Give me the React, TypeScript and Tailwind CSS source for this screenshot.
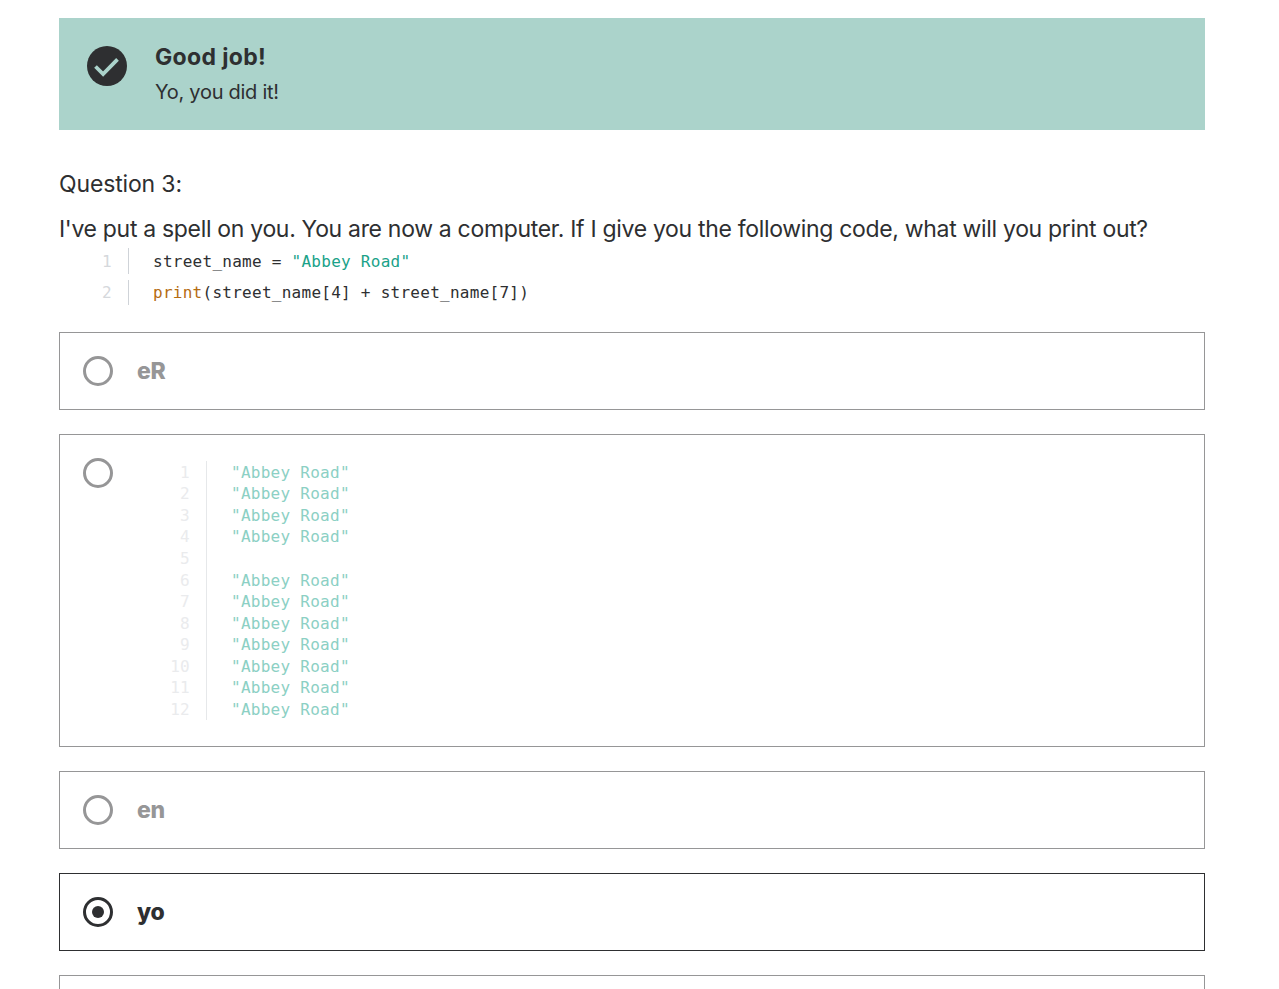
import type { ReactNode } from "react";

const abbey = '"Abbey Road"';
const outputLines = [abbey, abbey, abbey, abbey, "", abbey, abbey, abbey, abbey, abbey, abbey, abbey];

function Radio({ checked = false }: { checked?: boolean }) {
  return (
    <span
      className={`flex size-[30px] shrink-0 items-center justify-center rounded-full border-3 ${
        checked ? "border-[#2e2f31]" : "border-[#969697]"
      }`}
    >
      {checked && <span className="size-3 rounded-full bg-[#2e2f31]" />}
    </span>
  );
}

function Option({ checked = false, children }: { checked?: boolean; children?: ReactNode }) {
  return (
    <div
      className={`flex h-[78px] shrink-0 items-center gap-6 border px-[23px] text-[23px] font-extrabold tracking-[-0.3px] ${
        checked ? "border-[#2e2f31] text-[#2e2f31]" : "border-[#969697] text-[#969697]"
      }`}
    >
      <Radio checked={checked} />
      {children}
    </div>
  );
}

function CodeLine({ number, children }: { number: number; children: ReactNode }) {
  return (
    <div className="group flex h-[25px] items-center first:h-[26px]">
      <span className="w-[53px] text-right text-[#d5d8dc] group-first:pt-px">{number}</span>
      <span className="ml-4 h-full w-px bg-[#cfd3d8]" />
      <code className="ml-6 whitespace-pre font-['DejaVu_Sans_Mono',monospace] group-first:pt-px">{children}</code>
    </div>
  );
}

export default function App() {
  return (
    <main className="h-[989px] overflow-hidden bg-white pt-[18px] pr-[74px] pl-[59px] font-[Inter,sans-serif] text-[#2e2f31]">
      <section className="flex h-28 gap-7 bg-[#abd3cb] px-7 pt-[23px]">
        <svg className="mt-[5px] size-10 shrink-0" viewBox="0 0 40 40" fill="none">
          <circle cx="20" cy="20" r="20" fill="#2e2f31" />
          <path d="M8.5 20.5 L16.1 28 L30.5 13.4" stroke="#abd3cb" strokeWidth="3.8" />
        </svg>
        <div>
          <h1 className="text-[23px] leading-8 font-bold tracking-[0.35px]"><span>Good job!</span></h1>
          <p className="mt-1 text-[20px] leading-[30px] tracking-[-0.27px]"><span>Yo, you did it!</span></p>
        </div>
      </section>

      <h2 className="mt-9 text-[23px] leading-9 tracking-[-0.15px]"><span>Question 3:</span></h2>
      <p className="mt-[9px] text-[23px] leading-9 tracking-[-0.317px] whitespace-nowrap">
        <span>I've put a spell on you. You are now a computer. If I give you the following code, what will you print out?</span>
      </p>

      <div className="mt-px flex flex-col gap-[6px] font-['DejaVu_Sans_Mono',monospace] text-[16px] tracking-[0.265px]">
        <CodeLine number={1}>
          street_name = <span className="text-[#1aa289]">{abbey}</span>
        </CodeLine>
        <CodeLine number={2}>
          <span className="text-[#b56c12]">print</span>(street_name[4] + street_name[7])
        </CodeLine>
      </div>

      <div className="mt-[27px] flex flex-col gap-6">
        <Option>eR</Option>
        <div className="flex h-[313px] shrink-0 border border-[#969697] px-[23px] pt-[23px]">
          <Radio />
          <div className="mt-[3px] flex h-[259px] font-['DejaVu_Sans_Mono',monospace] text-[16px] leading-[21.58px] tracking-[0.265px]">
            <div className="w-[94px] border-r border-[#e6e8ea] pt-[0.7px] pr-4 text-right text-[#eaebed]">
              {outputLines.map((_, i) => (
                <div key={i}>{i + 1}</div>
              ))}
            </div>
            <div className="pt-[0.7px] pl-6 text-[#8cd0c4]">
              {outputLines.map((line, i) => (
                <div key={i} className="h-[21.58px] whitespace-pre">{line}</div>
              ))}
            </div>
          </div>
        </div>
        <Option>en</Option>
        <Option checked>yo</Option>
        <Option />
      </div>
    </main>
  );
}
